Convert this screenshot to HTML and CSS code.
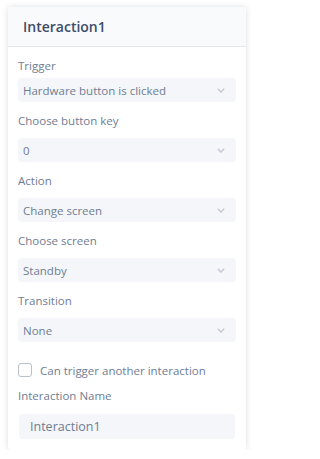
FILE: index.html
```html
<!DOCTYPE html>
<html>
<head>
<meta charset="utf-8">
<link rel="stylesheet" href="styles.css">
</head>
<body>
<div class="card">
  <div class="header">Interaction1</div>
  <div class="body">
    <div class="field first">
      <div class="label">Trigger</div>
      <div class="select"><span>Hardware button is clicked</span><svg class="chev" width="8" height="5" viewBox="0 0 8 5"><path d="M0.8 0.8 L4 4 L7.2 0.8" fill="none" stroke="#c5cbd4" stroke-width="1.5"/></svg></div>
    </div>
    <div class="field">
      <div class="label">Choose button key</div>
      <div class="select"><span>0</span><svg class="chev" width="8" height="5" viewBox="0 0 8 5"><path d="M0.8 0.8 L4 4 L7.2 0.8" fill="none" stroke="#c5cbd4" stroke-width="1.5"/></svg></div>
    </div>
    <div class="field">
      <div class="label">Action</div>
      <div class="select"><span>Change screen</span><svg class="chev" width="8" height="5" viewBox="0 0 8 5"><path d="M0.8 0.8 L4 4 L7.2 0.8" fill="none" stroke="#c5cbd4" stroke-width="1.5"/></svg></div>
    </div>
    <div class="field">
      <div class="label">Choose screen</div>
      <div class="select"><span>Standby</span><svg class="chev" width="8" height="5" viewBox="0 0 8 5"><path d="M0.8 0.8 L4 4 L7.2 0.8" fill="none" stroke="#c5cbd4" stroke-width="1.5"/></svg></div>
    </div>
    <div class="field">
      <div class="label">Transition</div>
      <div class="select"><span>None</span><svg class="chev" width="8" height="5" viewBox="0 0 8 5"><path d="M0.8 0.8 L4 4 L7.2 0.8" fill="none" stroke="#c5cbd4" stroke-width="1.5"/></svg></div>
    </div>
    <label class="check"><span class="box"></span><span>Can trigger another interaction</span></label>
    <div class="field name">
      <div class="label">Interaction Name</div>
      <div class="input">Interaction1</div>
    </div>
  </div>
</div>
</body>
</html>
```
FILE: styles.css
```css
html, body {
  margin: 0;
  padding: 0;
  background: #ffffff;
}
body {
  padding: 7px 7px 0 8px;
  font-family: "Open Sans", Lato, sans-serif;
}
.card {
  width: 238px;
  height: 443px;
  background: #ffffff;
  border-radius: 3px;
  box-shadow: 0 0 6px rgba(40, 50, 70, 0.16);
  box-sizing: border-box;
  overflow: hidden;
}
.header {
  height: 40px;
  box-sizing: border-box;
  padding: 0 15px;
  display: flex;
  align-items: center;
  background: #f9fafb;
  border-bottom: 1px solid #e3e6eb;
  font-size: 14px;
  font-weight: 600;
  color: #3d4c68;
}
.body {
  padding: 11px 10px 0 10px;
  display: flex;
  flex-direction: column;
}
.field {
  display: flex;
  flex-direction: column;
}
.field + .field {
  margin-top: 11px;
}
.label {
  height: 16px;
  line-height: 16px;
  font-size: 11.5px;
  color: #6f7d93;
  margin-bottom: 9px;
}
.field.first .label {
  margin-bottom: 4px;
}
.select {
  height: 24px;
  box-sizing: border-box;
  background: #f4f6f9;
  border-radius: 4px;
  display: flex;
  align-items: center;
  justify-content: space-between;
  padding: 0 11px 0 5px;
  font-size: 11.5px;
  color: #6f7d93;
}
.chev {
  display: block;
}
.check {
  display: flex;
  align-items: center;
  margin-top: 21px;
  height: 14px;
  font-size: 11.5px;
  color: #6f7d93;
}
.box {
  width: 14px;
  height: 14px;
  box-sizing: border-box;
  border: 1px solid #b9c1cc;
  border-radius: 3px;
  margin-right: 8px;
  background: #fff;
}
.field.name {
  margin-top: 11px;
}
.field.name .label {
  margin-bottom: 10px;
}
.input {
  margin-left: 1px;
  width: 216px;
  height: 25px;
  box-sizing: border-box;
  background: #f4f6f9;
  border-radius: 4px;
  padding: 0 11px;
  display: flex;
  align-items: center;
  font-size: 12.5px;
  color: #6f7d93;
}
```
